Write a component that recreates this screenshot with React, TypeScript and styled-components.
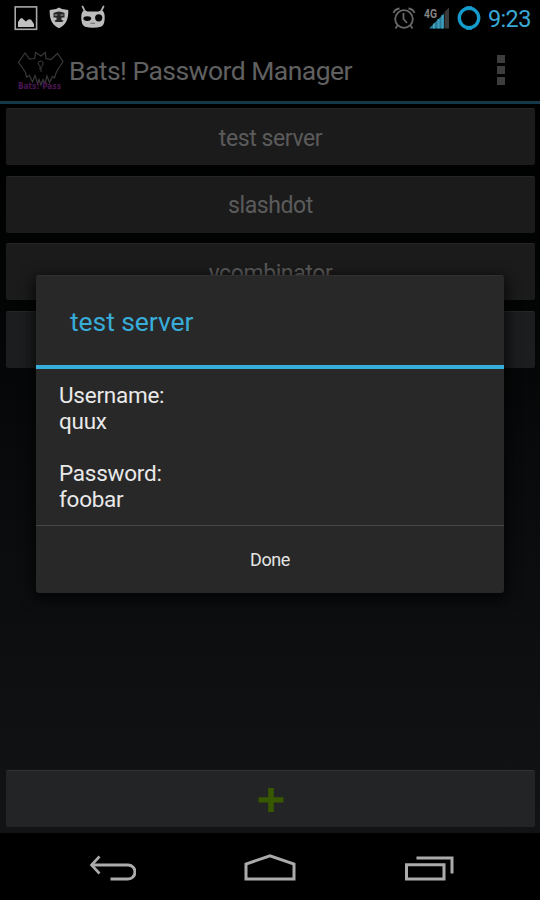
import React from 'react';
import styled, { createGlobalStyle } from 'styled-components';

const GlobalStyle = createGlobalStyle`
  * { box-sizing: border-box; }
  body { margin: 0; background: #000; font-family: Roboto, "Liberation Sans", sans-serif; }
  svg { display: block; }
`;

const Screen = styled.div`
  position: relative;
  width: 540px;
  height: 900px;
  display: flex;
  flex-direction: column;
  overflow: hidden;
  background: #000;
`;

const StatusBar = styled.header`
  height: 36px;
  display: flex;
  align-items: center;
  justify-content: space-between;
  padding: 0 9px 0 14px;
`;

const StatusGroup = styled.div<{ $gap: number }>`
  display: flex;
  align-items: center;
  gap: ${(p) => p.$gap}px;
`;

const Clock = styled.time`
  margin-left: -1px;
  width: 43px;
  padding-top: 1px;
  font-size: 23.5px;
  line-height: 36px;
  letter-spacing: -0.65px;
  color: #3aa9d6;
  white-space: nowrap;
`;

const ActionBar = styled.div`
  height: 68px;
  display: flex;
  align-items: center;
  padding: 0 35px 0 17px;
  border-bottom: 3px solid #14394b;
`;

const AppTitle = styled.h1`
  flex: 1;
  margin: 0 0 0 5px;
  padding-top: 4px;
  font-size: 26.5px;
  font-weight: 400;
  line-height: 32px;
  letter-spacing: -0.54px;
  color: #606060;
`;

const Overflow = styled.div`
  display: grid;
  gap: 3px;
  margin-top: 3px;
`;

const OverflowDot = styled.span`
  width: 8px;
  height: 8px;
  background: #3d3d3d;
`;

const Content = styled.main`
  flex: 1;
  display: flex;
  flex-direction: column;
  padding: 4px 5px 6px 6px;
  background: linear-gradient(#000 0%, #020303 22%, #07090a 45%, #0c0e0f 72%, #111314 100%);
`;

const ServerList = styled.div`
  flex: 1;
  display: flex;
  flex-direction: column;
  gap: 10.5px;
`;

const Tile = styled.button<{ $tone?: string; $edge?: string }>`
  height: 57px;
  flex: none;
  display: flex;
  align-items: center;
  justify-content: center;
  padding: 3px 0 0;
  border: 0;
  border-top: 1px solid ${(p) => p.$edge ?? '#262626'};
  border-radius: 2px;
  background: ${(p) => p.$tone ?? '#1b1b1b'};
  color: #5b5b5b;
  font-family: inherit;
  font-size: 23px;
  line-height: 28px;
  letter-spacing: -0.4px;
`;

const NavBar = styled.nav`
  height: 67px;
  display: grid;
  grid-template-columns: 48px 54px 50px;
  justify-content: space-between;
  align-items: center;
  padding: 5px 86px 0 88px;
  background: #000;
`;

const Dialog = styled.section`
  position: absolute;
  left: 36px;
  top: 275px;
  width: 468px;
  height: 318px;
  display: flex;
  flex-direction: column;
  border: 1px solid #303030;
  border-width: 1px 0 0;
  border-radius: 3px;
  background: #282828;
  box-shadow: 0 4px 14px 3px rgba(0, 0, 0, 0.65);
`;

const DialogTitle = styled.h2`
  height: 93px;
  margin: 0;
  padding: 0 34px;
  border-bottom: 4px solid #36aedc;
  font-size: 26.5px;
  font-weight: 400;
  line-height: 91px;
  letter-spacing: -0.08px;
  color: #38add9;
`;

const Credentials = styled.dl`
  flex: 1;
  margin: 0;
  padding: 13px 23px 0;
  display: flex;
  flex-direction: column;
  gap: 26px;
  font-size: 22.5px;
  line-height: 26px;
  letter-spacing: -0.25px;
  color: #e9e9e9;
`;

const Field = styled.div`
  dt, dd { margin: 0; }
`;

const DoneButton = styled.button`
  height: 68px;
  padding: 0;
  border: 0;
  border-top: 1px solid #474747;
  border-radius: 0 0 3px 3px;
  background: transparent;
  color: #e4e4e4;
  font-family: inherit;
  font-size: 18px;
  letter-spacing: -0.4px;
`;

const GalleryIcon = () => (
  <svg width="24" height="26" viewBox="0 0 24 26">
    <rect x="1.2" y="1.9" width="21.4" height="22.4" fill="none" stroke="#a8a8a8" strokeWidth="1.6" />
    <path d="M4 22v-5l2.500-3.500 1.500-.5 2 2 2 1.500 2-2h3l3 4.500v3z" fill="#c0c0c0" />
  </svg>
);

const ShieldIcon = () => (
  <svg width="20" height="22" viewBox="0 0 20 22">
    <path d="M10 .5l3 1.500 6.300 1c.2 8-1.500 14.500-9.300 18.200C2.200 17.500.4 11 .7 3L7 2z" fill="#bdbdbd" />
    <path d="M4.500 6q5.500-3 11 0v4.500h-3v2.500l2 .5-1 1.500h-7l-1-1.500 2-.5v-2.500h-3z" fill="#252525" />
    <path d="M5.500 8h3M11.500 8h3" stroke="#a5a5a5" strokeWidth="1.200" />
  </svg>
);

const RobotIcon = () => (
  <svg width="26" height="26" viewBox="0 0 26 26">
    <path d="M2.500 1.500l2.500 5M23.500 1.500l-2.500 5" stroke="#a9a9a9" strokeWidth="1.800" strokeLinecap="round" />
    <path d="M4 5.500q2 0 3.500 1h11q1.500-1 3.500-1Q25 7 24.700 13q0 7-3.700 8.800-8 1.800-16 0Q1.300 20 1.300 13 1 7 4 5.500z" fill="#bdbdbd" />
    <ellipse cx="7.300" cy="13.600" rx="3.900" ry="2.300" fill="#070707" />
    <circle cx="18.700" cy="12.800" r="3.600" fill="#070707" />
    <path d="M10.500 18.300h4.500" stroke="#777" strokeWidth="1.200" />
  </svg>
);

const AlarmIcon = () => (
  <svg width="24" height="24" viewBox="0 0 24 24" fill="none" stroke="#686868" strokeWidth="1.800">
    <circle cx="12" cy="13" r="8.800" />
    <path d="M11.500 7v6l3.500 4M1.500 7Q3 3 7.500 2.500M16.500 2.500Q21 3 22.500 7M5.500 19.500l-2 3M18.500 19.500l2 3" />
  </svg>
);

const NetworkLabel = styled.text`
  font: 700 12.5px Roboto, sans-serif;
  fill: #858585;
`;

const SignalIcon = () => (
  <svg width="27" height="24" viewBox="0 0 27 24">
    <path d="M6 22.500L21 7.500v15z" fill="#287b99" />
    <path d="M11 17.500v5M15.500 13v9.500M19.500 9v13.500" stroke="#3e9ebc" strokeWidth="2" />
    <path d="M21.500 6l4.500-4.500v21h-4.500z" fill="#3a3a3a" />
    <NetworkLabel x="1" y="11.500" textLength="13" lengthAdjust="spacingAndGlyphs">4G</NetworkLabel>
  </svg>
);

const BatteryRing = () => (
  <svg width="25" height="26" viewBox="0.5 0 25 26" fill="none" stroke="#159bcc">
    <circle cx="12.500" cy="13" r="9.700" strokeWidth="3.400" />
    <path d="M9.500 2h6M9.500 24h6" strokeWidth="1.500" />
  </svg>
);

const LogoLabel = styled.text`
  font: 700 8px "DejaVu Sans", sans-serif;
  fill: #4b1553;
`;

const BatLogo = () => (
  <svg width="47" height="42" viewBox="0 0 47 42">
    <path
      d="M8 5L1.500 14.500l3.500 4.500 3.500 5.500 1 4.500 3-1.500 3 6.500 2.500-6.500 2.500 8 1.500-4 2 5.500 2-5.500 2 4 2-7.500 2.500 6.500 3-6 2 1.500 1.500-5 2.500-4.500 4.500-7-5.500-8-6.500 6-5-1-.7-6-4.300 3.500-5.500-3.500-.8 6-5.200.5z"
      fill="none" stroke="#383838" strokeWidth="1.200"
    />
    <path d="M21 16q0-3 3-3t2 4l-2 2v5m-3-8l2 2v4" fill="none" stroke="#3c3c3c" />
    <LogoLabel x="1" y="40.500" textLength="43" lengthAdjust="spacingAndGlyphs">Bats! Pass</LogoLabel>
  </svg>
);

const PlusIcon = () => (
  <svg width="26" height="26" viewBox="0 0 26 26">
    <path d="M10.200.5h5.600v9.700h9.700v5.300h-9.700V25h-5.600v-9.500H.5v-5.300h9.700z" transform="translate(0 -1)" fill="#385800" />
  </svg>
);

const BackIcon = () => (
  <svg width="48" height="30" viewBox="0 0 48 30" fill="none" stroke="#ababab" strokeWidth="3">
    <path d="M3 11h37a7 7 0 0 1 0 14H22.500" />
    <path d="M11.500 2.500L3.500 11l8 8.500" strokeWidth="2.600" />
  </svg>
);

const HomeIcon = () => (
  <svg width="54" height="30" viewBox="0 0 54 30" fill="none" stroke="#ababab" strokeWidth="3">
    <path d="M3 25V10L27 1.800 51 10v15z" />
  </svg>
);

const RecentsIcon = () => (
  <svg width="50" height="30" viewBox="0 0 50 30" fill="none" stroke="#ababab" strokeWidth="3">
    <path d="M2.500 10.800h37.500V25H2.500zM12.500 4H48v15.500" />
  </svg>
);

const credentials = [
  { label: 'Username:', value: 'quux' },
  { label: 'Password:', value: 'foobar' },
];

export default function App() {
  return (
    <Screen>
      <GlobalStyle />
      <StatusBar>
        <StatusGroup $gap={11}>
          <GalleryIcon />
          <ShieldIcon />
          <RobotIcon />
        </StatusGroup>
        <StatusGroup $gap={7}>
          <AlarmIcon />
          <SignalIcon />
          <BatteryRing />
          <Clock>9:23</Clock>
        </StatusGroup>
      </StatusBar>
      <ActionBar>
        <BatLogo />
        <AppTitle>Bats! Password Manager</AppTitle>
        <Overflow>
          <OverflowDot />
          <OverflowDot />
          <OverflowDot />
        </Overflow>
      </ActionBar>
      <Content>
        <ServerList>
          <Tile>test server</Tile>
          <Tile>slashdot</Tile>
          <Tile>ycombinator</Tile>
          <Tile $tone="#1b1d1e" aria-label="Server" />
        </ServerList>
        <Tile $tone="#222425" $edge="#303233" aria-label="Add">
          <PlusIcon />
        </Tile>
      </Content>
      <NavBar>
        <BackIcon />
        <HomeIcon />
        <RecentsIcon />
      </NavBar>
      <Dialog role="dialog">
        <DialogTitle>test server</DialogTitle>
        <Credentials>
          {credentials.map((c) => (
            <Field key={c.label}>
              <dt>{c.label}</dt>
              <dd>{c.value}</dd>
            </Field>
          ))}
        </Credentials>
        <DoneButton>Done</DoneButton>
      </Dialog>
    </Screen>
  );
}
